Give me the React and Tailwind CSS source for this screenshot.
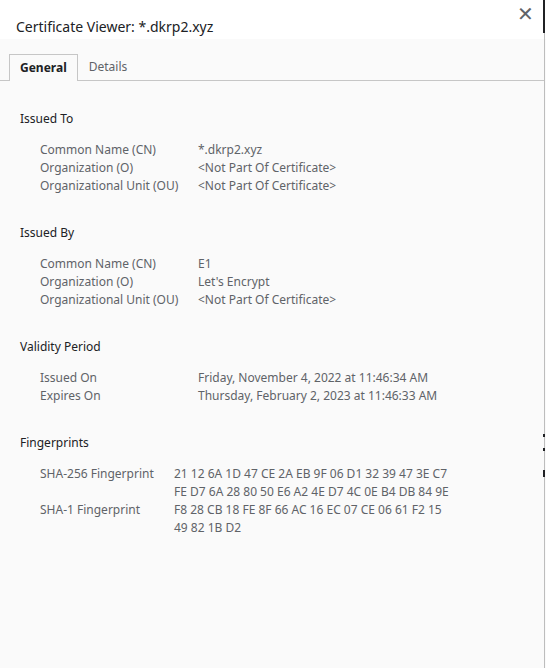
import React from "react";

const Row = ({ label, values, valueCol }) => (
  <div className="flex">
    <div className={valueCol}>{label}</div>
    <div className="flex flex-col">
      {values.map((v, i) => (
        <div key={i} className="h-[18px] leading-[18px]">{v}</div>
      ))}
    </div>
  </div>
);

const Section = ({ title, rows, valueCol = "w-[158px] shrink-0" }) => (
  <div className="flex flex-col gap-[11px]">
    <div className="h-[22px] leading-[22px] text-[12px] text-[#202124] pl-[20px]">{title}</div>
    <div className="pl-[40px] text-[12px] text-[#5f6368]">
      {rows.map((r, i) => (
        <Row key={i} label={r[0]} values={r.slice(1)} valueCol={valueCol} />
      ))}
    </div>
  </div>
);

export default function App() {
  return (
    <div className="relative w-[546px] h-[668px] overflow-hidden bg-[#fafafa] font-['Noto_Sans','Open_Sans',sans-serif]">
      <div className="h-[39px] bg-white flex items-start justify-between pl-[16px] pr-[12px]">
        <div className="mt-[17px] text-[14px] leading-[20px] text-[#202124]">Certificate Viewer: *.dkrp2.xyz</div>
        <div className="mt-[4px] text-[20px] leading-[20px] text-[#5f6368]">✕</div>
      </div>
      <div className="absolute right-[1px] top-0 w-[2px] h-[33px] bg-[#202124]" />
      <div className="absolute right-[1px] top-[33px] w-[1px] h-[635px] bg-[#bdbdbd]" />
      <div className="absolute right-[1px] top-[434px] w-[2px] h-[3px] bg-[#202124]" />
      <div className="absolute right-[1px] top-[448px] w-[2px] h-[3px] bg-[#202124]" />
      <div className="absolute right-[1px] top-[470px] w-[2px] h-[7px] bg-[#202124]" />

      <div className="mt-[15px] flex items-end border-b border-[#c6c6c6] pl-[9px] mr-[2px] h-[26px] box-content">
        <div className="h-[27px] mb-[-1px] px-[10px] border border-b-0 border-[#c6c6c6] bg-[#fafafa] flex items-center text-[12px] font-bold text-[#202124]">General</div>
        <div className="h-[26px] px-[11px] flex items-center text-[12px] text-[#5f6368]">Details</div>
      </div>

      <div className="pt-[27px] flex flex-col gap-[27px]">
        <Section
          title="Issued To"
          rows={[
            ["Common Name (CN)", "*.dkrp2.xyz"],
            ["Organization (O)", "<Not Part Of Certificate>"],
            ["Organizational Unit (OU)", "<Not Part Of Certificate>"],
          ]}
        />
        <Section
          title="Issued By"
          rows={[
            ["Common Name (CN)", "E1"],
            ["Organization (O)", "Let's Encrypt"],
            ["Organizational Unit (OU)", "<Not Part Of Certificate>"],
          ]}
        />
        <Section
          title="Validity Period"
          rows={[
            ["Issued On", "Friday, November 4, 2022 at 11:46:34 AM"],
            ["Expires On", "Thursday, February 2, 2023 at 11:46:33 AM"],
          ]}
        />
        <Section
          title="Fingerprints"
          valueCol="w-[134px] shrink-0"
          rows={[
            ["SHA-256 Fingerprint", "21 12 6A 1D 47 CE 2A EB 9F 06 D1 32 39 47 3E C7", "FE D7 6A 28 80 50 E6 A2 4E D7 4C 0E B4 DB 84 9E"],
            ["SHA-1 Fingerprint", "F8 28 CB 18 FE 8F 66 AC 16 EC 07 CE 06 61 F2 15", "49 82 1B D2"],
          ]}
        />
      </div>
    </div>
  );
}
